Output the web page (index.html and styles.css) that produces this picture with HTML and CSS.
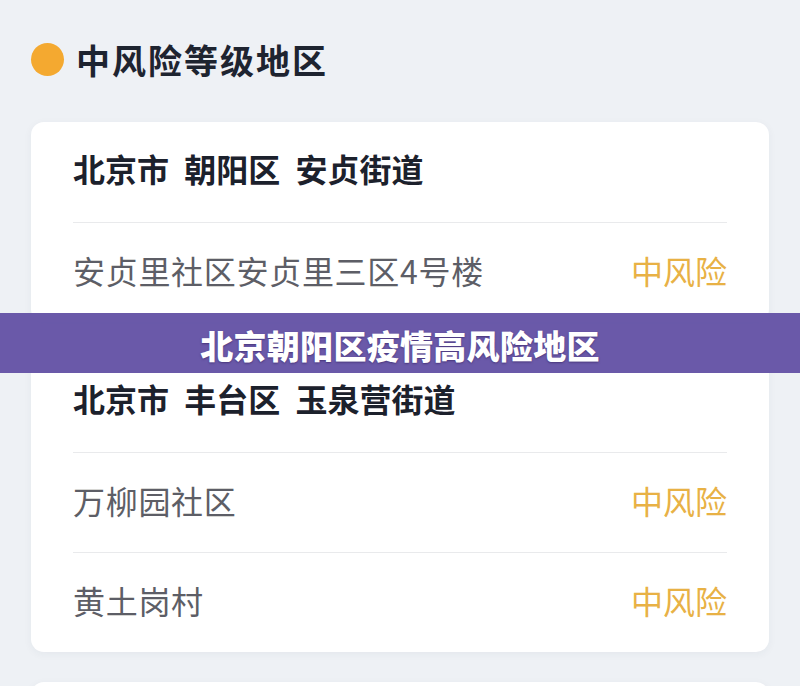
FILE: index.html
```html
<!DOCTYPE html>
<html lang="zh-CN">
<head>
    <meta charset="UTF-8">
    <meta name="viewport" content="width=device-width, initial-scale=1.0">
    <title>北京朝阳区疫情高风险地区</title>
    <link rel="stylesheet" href="styles.css">
</head>
<body>
    <div class="page">
        <!--section heading-->
        <div class="levelHeading">
            <span class="levelDot"></span>
            <h1>中风险等级地区</h1>
        </div>

        <div class="areaCard">
            <div class="areaRow areaTitle">北京市 朝阳区 安贞街道</div>
            <div class="areaRow">
                <span class="areaName">安贞里社区安贞里三区4号楼</span>
                <span class="areaRisk">中风险</span>
            </div>
        </div>

        <div class="areaCard">
            <div class="areaRow areaTitle">北京市 丰台区 玉泉营街道</div>
            <div class="areaRow">
                <span class="areaName">万柳园社区</span>
                <span class="areaRisk">中风险</span>
            </div>
            <div class="areaRow">
                <span class="areaName">黄土岗村</span>
                <span class="areaRisk">中风险</span>
            </div>
        </div>

        <!--next card, only its top edge is on screen-->
        <div class="areaCard emptyCard"></div>
    </div>

    <!--caption bar lying over the list-->
    <div class="captionBar">北京朝阳区疫情高风险地区</div>
</body>
</html>
```

FILE: styles.css
```css
*{
    box-sizing: border-box;
    font-family: "Noto Sans CJK SC", "Noto Sans", sans-serif;
}

body{
    margin: 0;
    background-color: #eef1f5;
    overflow: hidden;
}

.page{
    padding: 31px 31px 0 31px;
}

.levelHeading{
    display: flex;
    align-items: center;
    gap: 12px;
    height: 60px;
    margin-bottom: 31px;
}

.levelDot{
    width: 33px;
    height: 33px;
    border-radius: 50%;
    background-color: #f4a930;
    margin-top: -3px;
}

.levelHeading h1{
    margin: 0;
    padding-bottom: 4px;
    font-size: 34px;
    font-weight: 700;
    letter-spacing: 2px;
    color: #1e2430;
}

.areaCard{
    background-color: #fff;
    border-radius: 13px;
    padding: 0 42px;
    margin-bottom: 30px;
    box-shadow: 0 2px 8px rgba(40, 50, 70, 0.05);
}

.emptyCard{
    height: 100px;
}

.areaRow{
    display: flex;
    justify-content: space-between;
    align-items: center;
    height: 100px;
    padding-bottom: 6px;
    border-top: 1px solid #e9eaec;
}

.areaRow:first-child{
    border-top: none;
}

.areaTitle{
    font-size: 32px;
    font-weight: 700;
    word-spacing: 8px;
    color: #1c212c;
    padding-bottom: 8px;
}

.areaName{
    font-size: 32px;
    letter-spacing: 0.7px;
    color: #5d5e66;
}

.areaRisk{
    font-size: 32px;
    color: #e8b145;
}

.captionBar{
    position: absolute;
    left: 0;
    top: 313px;
    width: 100%;
    height: 60px;
    padding-top: 3px;
    display: flex;
    justify-content: center;
    align-items: center;
    background-color: rgba(100, 82, 165, 0.96);
    color: #fff;
    font-size: 33px;
    font-weight: 900;
    letter-spacing: 0.3px;
    text-shadow: 0 1px 2px rgba(40, 20, 80, 0.5);
}
```
